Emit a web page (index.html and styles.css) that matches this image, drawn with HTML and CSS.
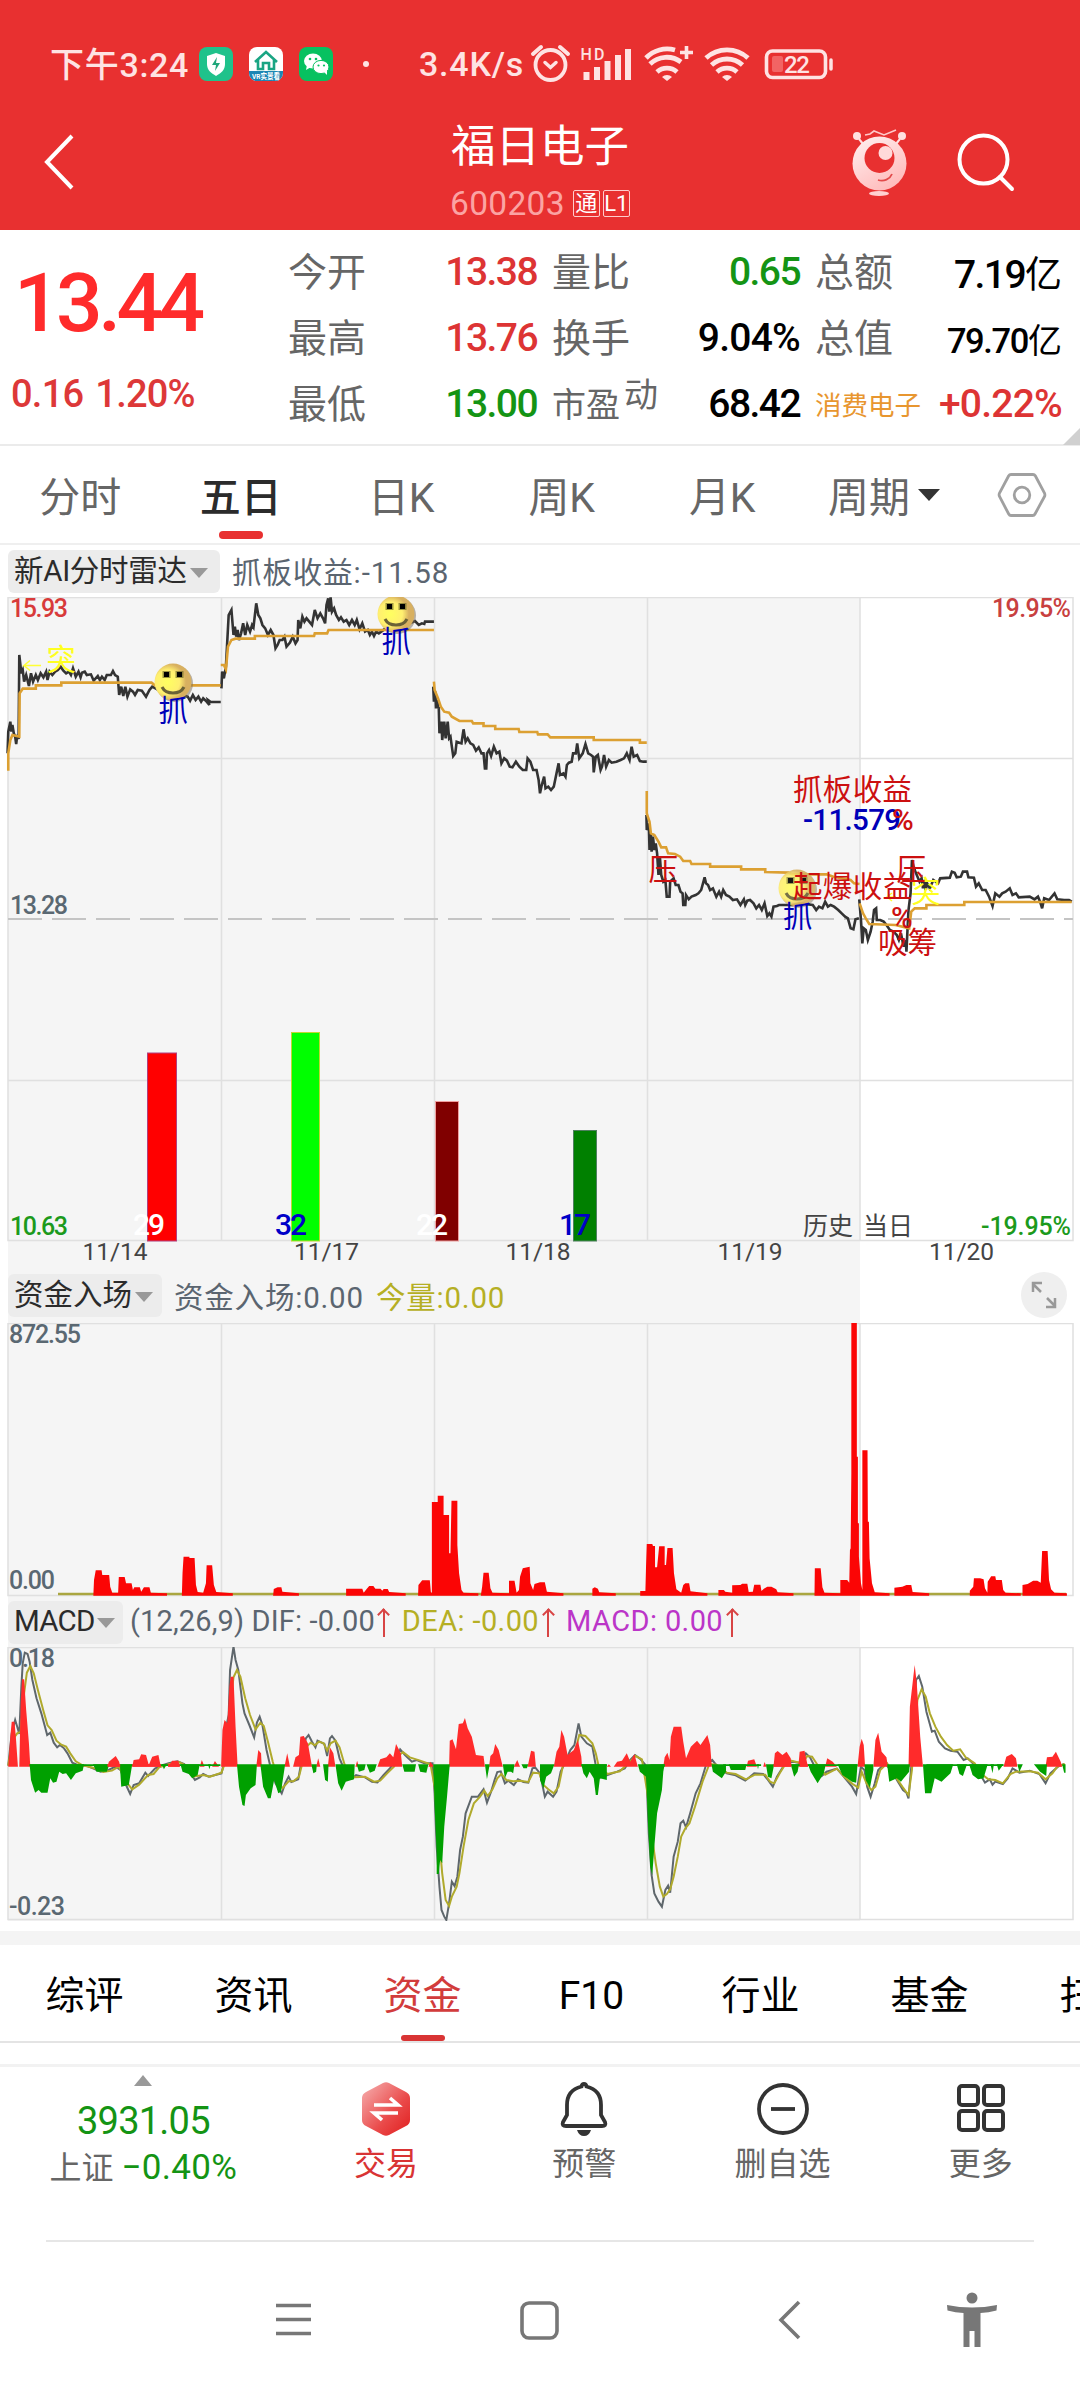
FILE: index.html
```html
<!DOCTYPE html>
<html lang="zh-CN">
<head>
    <meta charset="utf-8">
    <title>福日电子 600203</title>
    <link rel="stylesheet" href="styles.css">
</head>

<body>
    <div id="topArea">
        <div id="statusBar">
            <span class="clock">下午3:24</span>
            <svg class="appIcon" viewBox="0 0 34 34"><rect width="34" height="34" rx="8" fill="#1fc28b"/><path d="M17 6l9 3v8c0 6-4 9-9 12-5-3-9-6-9-12V9z" fill="#fff"/><path d="M18 10l-5 8h4l-1 6 5-8h-4z" fill="#1fa67a"/></svg>
            <svg class="appIcon" viewBox="0 0 34 34"><rect width="34" height="34" rx="8" fill="#fff"/><path d="M0 24h34v2a8 8 0 0 1-8 8H8a8 8 0 0 1-8-8z" fill="#1c86b4"/><path d="M6 15L17 5l11 10M9 13v9h5v-6h6v6h5v-9" fill="none" stroke="#1aa583" stroke-width="2.6"/><text x="17" y="32" font-size="8" font-weight="700" fill="#fff" text-anchor="middle" textLength="28" lengthAdjust="spacingAndGlyphs">VR实景看</text></svg>
            <svg class="appIcon" viewBox="0 0 34 34"><rect width="34" height="34" rx="8" fill="#07c160"/><ellipse cx="14" cy="14" rx="9" ry="7.5" fill="#fff"/><path d="M8 18l-1 5 5-3z" fill="#fff"/><ellipse cx="22" cy="20" rx="8" ry="6.6" fill="#fff" stroke="#07c160"/><path d="M25 25l3 3v-5z" fill="#fff"/><g fill="#07c160"><circle cx="11" cy="12" r="1.3"/><circle cx="17" cy="12" r="1.3"/><circle cx="19.500" cy="18.500" r="1.100"/><circle cx="25" cy="18.500" r="1.100"/></g></svg>
            <span class="dot"></span>
            <span class="speed">3.4K/s</span>
            <svg class="statusIcons" viewBox="530 44 306 40" fill="none" stroke="#fee3e3">
                <circle cx="550.500" cy="65" r="15" stroke-width="3.800"/>
                <path d="M545 62.500l5.500 5 5.500-5" stroke-width="3.500" stroke-linecap="round"/>
                <path d="M533 54l8-7M568 54l-8-7" stroke-width="4" stroke-linecap="round"/>
                <text class="hd" x="580.500" y="60" textLength="24">HD</text>
                <path d="M586.500 80v-8M597 80v-13M607.500 80v-19M618 80v-25M628 80v-31" stroke-width="6"/>
                <path d="M646 58a29 29 0 0 1 29-8M650 64a24 24 0 0 1 31-2M657 72a15 15 0 0 1 20 0" stroke-width="4.800"/>
                <path d="M667 81l-5-4a7 7 0 0 1 10 0z" fill="#fee3e3" stroke="none"/>
                <path d="M686.500 46v13M680 52.500h13" stroke-width="3.600"/>
                <path d="M706 58a31 31 0 0 1 42 0M711.500 65a23 23 0 0 1 31 0M717 72a15 15 0 0 1 20 0" stroke-width="4.800"/>
                <path d="M727 81l-5-4a7 7 0 0 1 10 0z" fill="#fee3e3" stroke="none"/>
                <rect x="766.500" y="51" width="59" height="26.500" rx="6" stroke-width="3.600"/>
                <rect x="772" y="56" width="11" height="16" rx="2" fill="#f26464" stroke="none"/>
                <path d="M831 60v9" stroke-width="3.500" stroke-linecap="round"/>
                <text class="battery" x="784" y="73" textLength="26">22</text>
            </svg>
        </div>
        <div id="titleBar">
            <svg class="backIcon" viewBox="0 0 34 60"><path d="M30 4L5 30l25 26"/></svg>
            <div class="stockTitle">
                <div class="stockName">福日电子</div>
                <div class="stockCode"><span>600203</span><b>通</b><b>L1</b></div>
            </div>
            <svg class="robotIcon" viewBox="848 125 62 75">
                <defs><linearGradient id="robotFill" x1="0" y1="0" x2="0.600" y2="1"><stop offset="0" stop-color="#fff2f2"/><stop offset="1" stop-color="#ffbcbc"/></linearGradient></defs>
                <path d="M865 135l5-1 4-3 10 4 12-5M861 142l3 3M898 142l-3 3" fill="none" stroke="#ffc9c9" stroke-width="1.600"/>
                <circle cx="857" cy="136" r="4" fill="#ffe0e0"/><circle cx="902" cy="136" r="4" fill="#ffe0e0"/>
                <path d="M859 139l5 6M900 139l-5 6" stroke="#ffe0e0" stroke-width="2"/>
                <circle cx="879.500" cy="163.500" r="27" fill="url(#robotFill)"/>
                <circle cx="879.500" cy="158" r="15" fill="#e83030"/>
                <circle cx="885.500" cy="153" r="7" fill="#ffd9d9"/>
                <path d="M878 180c6 2 12-1 14-6" fill="none" stroke="#e24a4a" stroke-width="1.800"/>
                <ellipse cx="879" cy="193.500" rx="10" ry="2.600" fill="#ffd0d0"/>
            </svg>
            <svg class="searchIcon" viewBox="0 0 60 60"><circle cx="27.500" cy="27.500" r="24"/><path d="M44 45l12 12"/></svg>
        </div>
    </div>

    <div id="quote">
        <div class="price">
            <div class="last">13.44</div>
            <div class="change"><span>0.16</span><span>1.20%</span></div>
        </div>
        <div class="grid">
            <div class="item"><label>今开</label><span class="up">13.38</span></div>
            <div class="item"><label>量比</label><span class="down">0.65</span></div>
            <div class="item"><label>总额</label><span>7.19<i>亿</i></span></div>
            <div class="item"><label>最高</label><span class="up">13.76</span></div>
            <div class="item"><label>换手</label><span class="percent">9.04%</span></div>
            <div class="item"><label>总值</label><span class="small">79.70<i>亿</i></span></div>
            <div class="item"><label>最低</label><span class="down">13.00</span></div>
            <div class="item"><label class="pe">市盈<sup>动</sup></label><span>68.42</span></div>
            <div class="item"><label class="sector">消费电子</label><span class="up percent">+0.22%</span></div>
        </div>
        <div class="corner"></div>
    </div>

    <div id="periodTabs">
        <span class="tab">分时</span>
        <span class="tab active">五日</span>
        <span class="tab">日K</span>
        <span class="tab">周K</span>
        <span class="tab">月K</span>
        <span class="tab">周期<i class="caret"></i></span>
        <svg class="settingIcon" viewBox="0 0 50 46"><path d="M14 2.500h22q1.500 0 2.300 1.300L47.500 21q.8 2 0 3.500L38 42q-.8 1.500-2.300 1.500H14q-1.500 0-2.300-1.500L2.500 24.500q-.8-1.700 0-3.500L11.700 3.800Q12.500 2.500 14 2.500z"/><circle cx="25" cy="23" r="7.800"/></svg>
    </div>

    <div class="indicator first">
        <span class="chip">新AI分时雷达<i class="caret"></i></span>
        <span class="value">抓板收益:-11.58</span>
    </div>

    <div id="charts">
        <!-- price -->
        <svg class="chart" viewBox="0 597 1080 670" height="670">
            <g class="gridLines">
                <path d="M8 597.500H1073V1240.500H8zM8 758.500H1073M8 1080.500H1073M221.500 597V1240M434.500 597V1240M647.500 597V1240M860 597V1240"/>
                <path class="dash" d="M8 919H1073"/>
            </g>
            <g class="bars">
                <rect x="147.500" y="1053" width="29" height="188" fill="#f00" stroke="#b04080"/>
                <rect x="291.500" y="1032.500" width="28" height="208.500" fill="#0f0" stroke="#c0d830"/>
                <rect x="435.500" y="1101.500" width="23" height="139.500" fill="#800000" stroke="#f0a0a0"/>
                <rect x="573.500" y="1130.500" width="23" height="110.500" fill="#008000" stroke="#508060"/>
            </g>
            <g class="barText">
                <text x="133" y="1235" fill="#fff" textLength="32">29</text>
                <text x="275" y="1235" fill="#0000c8" textLength="32">32</text>
                <text x="416" y="1235" fill="#fff" textLength="32">22</text>
                <text x="559" y="1235" fill="#0000c8" textLength="32">17</text>
            </g>
            <g class="lines" transform="translate(0 540) scale(.34439 .33333)">
                <path class="priceLine" d="M22 640L24 575L30 545L33 575L36 555L40 580L44 590L47 612L50 585L54 597L56 345L62 400L66 390L70 425L76 405L84 438L90 400L96 425L104 405L110 420L118 400L126 412L134 395L138 420L144 395L152 405L160 395L168 390L176 380L184 392L192 400L200 395L206 405L212 385L220 410L228 395L234 412L238 398L246 395L252 405L264 403L272 422L284 408L290 420L296 410L304 420L310 405L322 405L328 393L334 405L342 410L346 465L352 440L358 468L364 440L370 470L378 448L386 455L392 465L400 450L412 452L424 470L434 450L442 440L460 450L500 455L545 470L552 482L560 465L568 480L576 470L584 485L590 475L600 485L608 495L604 480L612 486L641 486"/>
                <path class="priceLine" d="M643 445L645 395L650 415L656 380L664 225L672 210L678 285L682 260L686 290L690 270L694 300L700 280L706 250L712 285L718 255L726 275L732 255L736 262L744 190L750 225L756 235L762 255L770 265L778 285L786 270L794 285L800 325L806 315L812 300L820 300L826 290L832 320L842 308L850 290L858 310L864 300L866 240L872 265L878 230L884 245L890 235L898 245L906 255L914 210L922 235L930 220L938 235L944 250L948 195L953 175L956 215L960 172L964 215L970 205L976 225L984 240L990 232L998 245L1006 240L1014 255L1022 240L1030 255L1036 240L1044 268L1052 250L1060 275L1068 270L1074 285L1080 275L1086 288L1092 275L1100 280L1120 265L1150 262L1190 250L1205 243L1216 255L1225 250L1232 252L1234 245L1260 245"/>
                <path class="priceLine" d="M1258 440L1260 485L1264 455L1266 505L1270 480L1272 505L1274 500L1276 580L1282 545L1284 600L1290 545L1294 595L1300 545L1304 595L1308 590L1312 620L1316 648L1322 640L1326 605L1334 608L1340 610L1346 568L1352 605L1358 595L1366 610L1374 615L1382 632L1390 622L1398 640L1404 640L1408 685L1412 685L1414 640L1420 630L1426 648L1434 620L1442 640L1450 635L1456 670L1464 655L1472 662L1480 680L1488 682L1498 665L1508 680L1518 690L1528 690L1532 655L1540 665L1548 690L1558 690L1564 720L1568 760L1572 740L1580 710L1584 745L1592 740L1600 750L1608 740L1616 700L1622 670L1626 705L1636 700L1642 710L1646 675L1652 668L1660 665L1664 640L1672 640L1676 610L1682 655L1692 640L1700 612L1708 640L1716 645L1722 650L1724 697L1730 650L1736 645L1744 690L1748 680L1754 645L1760 680L1768 660L1776 668L1790 665L1802 660L1812 655L1820 640L1828 660L1834 620L1840 650L1850 645L1858 663L1868 665L1878 665"/>
                <path class="priceLine" d="M1877 825L1878 870L1884 850L1886 930L1890 880L1892 935L1896 890L1900 930L1904 910L1908 940L1912 1005L1916 950L1920 1005L1926 1025L1932 1020L1936 1070L1944 1070L1946 1025L1956 1015L1962 1035L1970 1035L1976 1055L1982 1060L1984 1095L1990 1095L1992 1065L2000 1078L2008 1070L2020 1065L2028 1060L2036 1050L2046 1012L2050 1030L2056 1035L2062 1050L2070 1045L2080 1070L2088 1055L2094 1070L2100 1050L2108 1065L2118 1070L2128 1080L2140 1078L2150 1095L2160 1078L2164 1095L2170 1082L2178 1080L2188 1090L2196 1105L2204 1095L2212 1110L2220 1090L2228 1128L2234 1120L2240 1130L2246 1100L2256 1098L2262 1095L2300 1095L2320 1090L2360 1095L2370 1110L2378 1100L2388 1105L2396 1085L2404 1100L2412 1095L2422 1100L2434 1110L2444 1120L2454 1130L2462 1135L2470 1165L2478 1168L2484 1138L2494 1135"/>
                <path class="priceLine" d="M2495 1078L2500 1140L2504 1210L2508 1165L2514 1170L2520 1200L2528 1175L2534 1145L2538 1110L2544 1105L2546 1140L2556 1140L2566 1145L2574 1155L2584 1170L2594 1175L2604 1185L2610 1200L2616 1180L2624 1220L2630 1200L2632 1235L2636 1150L2638 1110L2644 1060L2648 960L2656 990L2662 1005L2670 1025L2676 1015L2680 1045L2684 1020L2688 1050L2692 1030L2700 1045L2710 1020L2724 1030L2730 1015L2758 1013L2764 995L2772 998L2778 1012L2790 1010L2796 995L2808 995L2812 1012L2828 1013L2834 1040L2842 1030L2852 1050L2862 1050L2872 1070L2882 1098L2890 1060L2902 1070L2910 1060L2920 1055L2932 1045L2940 1065L2950 1060L2958 1072L2990 1070L3004 1078L3014 1070L3020 1085L3026 1105L3032 1075L3046 1080L3062 1060L3070 1078L3090 1080L3104 1080L3112 1085"/>
                <path class="avgLine" d="M24 692V640L30 600L36 585L56 590L57 460L66 446H104V436H178V428H440L450 436H641M641 375L650 375L656 388L662 320L672 300L684 296H740V288H912L914 280H950L954 270H1260M1260 425L1262 450L1272 475L1280 500L1290 515L1304 518L1312 530L1334 543H1370L1374 550H1404V558H1438V567H1506L1508 576H1560L1562 583H1590L1598 592H1724V600H1858V608H1878M1878 753V820L1886 845L1890 880L1900 885L1912 905L1920 922H1934L1940 940L1960 942L1975 950L1984 963H2004L2008 972H2062V980H2152V988H2222V996L2290 998L2300 1003H2400L2420 1010L2470 1020L2480 1030L2496 1032M2496 1090L2506 1120L2514 1135L2524 1152L2600 1155L2640 1165L2646 1115L2656 1105H2690V1095H2800V1086H3112"/>
            </g>
            <defs>
                <radialGradient id="faceFill" cx=".35" cy=".5"><stop offset="0" stop-color="#ffff60"/><stop offset=".65" stop-color="#ffef70"/><stop offset="1" stop-color="#d8b060"/></radialGradient>
                <g id="face">
                    <circle cx="1.500" cy="1.500" r="18.500" fill="#776a55" opacity=".5"/>
                    <circle r="18.500" fill="url(#faceFill)"/>
                    <path d="M-10.500-11h8v7h-8zM2.500-11h8v7h-8z" fill="#5c5a20" opacity=".6"/>
                    <path d="M-9-10h5v5h-5zM4-10h5v5H4z" fill="#000"/>
                    <path d="M-11 5q3 6 11 6t11-6" fill="none" stroke="#6b6236" stroke-width="3"/>
                </g>
            </defs>
            <use href="#face" x="173" y="682"/>
            <use href="#face" x="396" y="614"/>
            <use href="#face" x="797" y="888" opacity=".9"/>
            <g class="marks">
                <text class="blue" x="158.500" y="721">抓</text>
                <text class="blue" x="381.500" y="652">抓</text>
                <text class="blue" x="783" y="927">抓</text>
                <path d="M41 665.500H24l6-5M24 665.500l6 5" fill="none" stroke="#ff3" stroke-width="1.500"/>
                <path d="M896 897H887l5-4M887 897l5 4" fill="none" stroke="#ff3" stroke-width="1.500"/>
                <text class="yellow" x="46.500" y="670">突</text>
                <text class="yellow" x="911" y="902">突</text>
                <text class="red" x="793" y="800" textLength="119">抓板收益</text>
                <text class="blue num" x="803" y="830" textLength="98">-11.579</text>
                <text class="red num" x="892" y="830">%</text>
                <text class="red" x="648.500" y="880">压</text>
                <text class="red" x="896.500" y="880">压</text>
                <text class="red" x="793" y="897" textLength="119">起爆收益</text>
                <text class="red num" x="891" y="928">%</text>
                <text class="red" x="878" y="953" textLength="59">吸筹</text>
            </g>
            <g class="axis">
                <text x="10" y="617" textLength="58" fill="#d83a3a">15.93</text>
                <text x="992" y="617" textLength="79" fill="#c84040">19.95%</text>
                <text x="10" y="914" textLength="58">13.28</text>
                <text x="10" y="1235" textLength="58" fill="#1c9a1c">10.63</text>
                <text x="981" y="1235" textLength="90" fill="#1c9a1c">-19.95%</text>
                <text class="day" x="803" y="1235" textLength="50">历史</text>
                <text class="day" x="863" y="1235" textLength="50">当日</text>
            </g>
            <g class="dates">
                <text x="115" y="1260">11/14</text>
                <text x="326.500" y="1260">11/17</text>
                <text x="538" y="1260">11/18</text>
                <text x="750" y="1260">11/19</text>
                <text x="961.500" y="1260">11/20</text>
            </g>
        </svg>

        <div class="indicator second">
            <span class="chip">资金入场<i class="caret"></i></span>
            <span class="value">资金入场:0.00</span>
            <span class="value olive">今量:0.00</span>
            <svg class="expandIcon" viewBox="0 0 46 46"><circle cx="23" cy="23" r="23" fill="#efefef"/><path d="M20 20l-8-8M12 20v-9h9M26 26l8 8M34 26v9h-9" fill="none" stroke="#999" stroke-width="2.500"/></svg>
        </div>

        <!-- money flow -->
        <svg class="chart" viewBox="0 1323 1080 274" height="274">
            <path class="gridLines" d="M8 1323.500H1073V1595.500H8zM221.500 1323V1595M434.500 1323V1595M647.500 1323V1595M860 1323V1595"/>
            <path d="M58 1594H1066" stroke="#aaa640" stroke-width="2.500"/>
            <g fill="#fb0505" transform="translate(0 1310) scale(.34439 .33333)">
                <path d="M271 857L273 810L278 781H295L297 795H317L320 830L326 848H343L345 801H362L366 820H382L386 840L390 832H406L410 845L418 832H434L438 848L485 850V857z"/>
                <path d="M528 857L530 790L533 740H550V744H565L569 825L574 846L590 848L598 820L600 766H616L621 825L628 846L676 850V857z"/>
                <path d="M793 857L795 837L806 832H817L820 845L868 850V857z"/>
                <path d="M1005 857V836H1052L1056 848L1064 838L1072 828H1084L1090 836H1105L1110 842L1114 837H1126L1130 846L1178 850V857z"/>
                <path d="M1214 857L1215 825L1226 811H1248L1251 845L1254 850V576H1271V557H1288V615H1304V730H1308L1311 572H1328V705L1333 790L1340 840L1346 848L1389 850V857z"/>
                <path d="M1396 857L1400 830L1404 788H1419L1424 835L1430 848L1478 850V812H1494L1500 848L1507 840L1510 800L1518 775L1538 770L1540 820L1548 840L1552 822L1568 817H1582L1588 845L1636 850V857z"/>
                <path d="M1720 857V836L1727 832L1736 836L1740 847L1788 850V857z"/>
                <path d="M1859 857V843H1874L1876 765L1878 702H1894L1896 708H1902V772H1908L1912 730L1914 709H1930V765H1934L1938 714H1953L1957 790L1964 838L1978 848L1984 825L1990 820H2001L2005 844L2054 850V857z"/>
                <path d="M2086 857V840H2102L2106 845L2126 848V826L2150 825L2155 821H2170L2174 846L2186 845L2190 824H2208L2211 843L2218 836L2228 830H2240L2254 838L2258 847L2304 850V857z"/>
                <path d="M2365 857L2366 775H2383L2388 832L2394 848L2440 850V810H2460L2466 818L2468 720L2470 715L2472 490V37H2488V440H2491V640H2494V740L2500 820L2504 840V421H2519L2520 635H2523L2525 745L2532 820L2540 847L2583 850V857z"/>
                <path d="M2597 857V833L2620 830L2632 825H2646L2650 846L2698 850V857z"/>
                <path d="M2816 857V842L2826 830L2828 805H2846L2856 808L2860 835L2867 848L2868 815L2878 799H2890L2892 810H2909L2913 840L2920 848L2964 850V857z"/>
                <path d="M2969 857V825L2984 822L3000 812L3012 812L3022 818L3026 723H3042L3046 810L3052 838L3062 848L3098 850V857z"/>
            </g>
            <g class="axis">
                <text x="9" y="1343" textLength="72">872.55</text>
                <text x="9" y="1589" textLength="46">0.00</text>
            </g>
        </svg>

        <div class="indicator third">
            <span class="chip">MACD<i class="caret"></i></span>
            <span class="value">(12,26,9) DIF: -0.00<i class="arrow"></i></span>
            <span class="value olive">DEA: -0.00<i class="arrow"></i></span>
            <span class="value purple">MACD: 0.00<i class="arrow"></i></span>
        </div>

        <!-- macd -->
        <svg class="chart" viewBox="0 1647 1080 274" height="274">
            <path class="gridLines" d="M8 1647.500H1073V1919.500H8zM221.500 1647V1919M434.500 1647V1919M647.500 1647V1919M860 1647V1919"/>
            <g class="lines" transform="translate(0 1620) scale(.34439 .33333)">
                <path class="difLine" d="M24 437L34 340L44 300L50 320L56 342L62 200L66 130L72 98L80 102L86 125L94 180L106 235L120 280L130 318L137 345L146 338L156 368L166 382L174 375L186 385L196 400L210 428L230 437L250 437L270 445L292 455L315 450L335 440L350 450L366 495L378 522L388 495L404 490L422 458L430 468L450 446L465 438L490 430L515 424L535 432L555 462L566 480L580 472L590 462L606 470L625 465L643 460L648 440L656 325L664 285L668 150L678 80L684 120L692 150L704 250L710 280L724 315L738 352L746 308L754 290L762 315L774 390L784 435L800 490L818 520L828 490L838 470L846 486L866 478L876 420L888 355L896 345L906 365L916 382L922 362L934 368L942 372L950 408L958 355L964 348L974 362L986 415L1000 450L1024 475L1034 465L1060 472L1080 485L1096 487L1114 465L1132 445L1150 420L1162 388L1176 405L1196 425L1210 420L1232 430L1256 430L1262 520L1268 680L1276 800L1282 870L1290 890L1296 900L1304 850L1312 785L1320 798L1328 770L1336 690L1344 650L1352 580L1370 530L1388 530L1404 508L1414 548L1426 515L1436 480L1444 456L1454 454L1466 490L1476 482L1492 495L1504 478L1520 486L1534 488L1546 445L1554 442L1568 460L1576 500L1582 530L1590 515L1606 530L1616 515L1628 455L1640 430L1656 390L1668 375L1680 310L1688 350L1704 370L1720 380L1730 437L1736 475L1764 465L1792 455L1814 445L1830 420L1844 405L1860 418L1876 437L1884 640L1892 765L1900 820L1912 845L1922 860L1932 810L1940 797L1946 818L1956 710L1968 665L1976 610L1984 602L1992 622L2004 580L2020 520L2034 490L2050 435L2068 420L2082 438L2110 460L2136 466L2164 482L2190 460L2216 462L2230 480L2244 500L2256 470L2280 430L2304 425L2326 430L2340 400L2352 412L2366 440L2386 468L2400 455L2430 446L2450 470L2474 500L2486 522L2500 440L2510 450L2518 500L2528 530L2540 490L2550 450L2570 430L2590 455L2610 490L2622 510L2632 518L2638 535L2646 440L2652 300L2660 180L2668 168L2678 200L2690 275L2706 335L2714 332L2726 365L2744 385L2760 392L2780 395L2798 420L2810 415L2830 435L2850 470L2860 488L2874 478L2882 494L2890 485L2912 492L2926 475L2940 445L2960 458L2990 452L3018 462L3036 490L3050 460L3072 440L3090 432"/>
                <path class="deaLine" d="M24 437L36 360L50 340L60 335L70 220L78 158L88 138L98 160L110 210L126 272L138 316L150 330L164 362L178 374L192 380L204 400L220 424L240 436L270 443L300 456L325 452L345 440L370 490L384 508L404 494L430 465L446 462L462 442L490 433L520 426L540 437L560 470L590 465L610 470L643 458L650 438L662 340L670 240L678 172L688 150L698 170L712 235L726 285L742 328L756 308L766 318L778 365L792 425L806 475L820 505L838 484L852 484L868 470L878 430L892 378L902 368L914 376L926 365L940 370L950 392L960 370L974 362L986 382L1000 432L1014 465L1030 472L1060 470L1086 485L1104 482L1124 460L1144 440L1160 405L1170 396L1190 412L1220 422L1250 433L1262 500L1274 640L1284 760L1294 840L1304 858L1312 830L1326 800L1334 760L1346 680L1360 600L1376 550L1394 530L1406 512L1416 528L1430 508L1444 475L1456 462L1470 480L1490 484L1510 482L1534 486L1548 458L1566 460L1578 495L1592 508L1608 520L1622 500L1634 440L1650 410L1670 395L1682 345L1700 348L1720 370L1730 400L1738 437L1764 462L1800 454L1824 430L1846 408L1864 418L1880 520L1892 640L1904 730L1916 800L1926 830L1936 822L1946 808L1956 770L1968 710L1978 650L1990 625L2002 610L2018 560L2040 485L2060 432L2080 434L2110 458L2136 462L2166 478L2192 464L2222 464L2236 485L2248 490L2264 460L2288 420L2310 425L2330 430L2344 408L2358 410L2374 435L2396 464L2430 446L2456 475L2476 492L2492 503L2502 455L2516 490L2530 510L2542 500L2556 450L2576 430L2600 470L2620 500L2638 525L2648 450L2656 330L2664 240L2676 208L2688 230L2700 280L2716 320L2732 350L2750 375L2768 392L2788 388L2804 412L2830 430L2850 462L2870 478L2890 480L2912 490L2934 462L2950 455L2990 454L3014 458L3036 478L3056 460L3070 440L3092 432"/>
                <path class="rise" d="M24 440L30 350L34 305H42L46 350L52 440L56 440L60 250L64 178H70L76 270L84 370L88 440zM312 440L316 425L336 408L346 425L349 440zM384 440L388 420L404 418L410 403L424 405L432 435L442 410L460 405L467 440zM488 440L500 422H518L522 440zM580 440L586 420L594 440zM616 440L624 423L636 440zM642 440L646 330L652 300L660 310L666 200L670 170H678L684 320L690 440zM744 440L750 390L758 400L760 440zM826 440L834 400L842 440zM851 440L858 412L868 405L872 350L882 348L894 370L906 440zM918 440L924 415L930 440zM952 440L958 382L968 400L974 440zM1032 440L1037 422L1042 440zM1096 440L1104 418L1122 412L1132 400L1142 412L1150 372L1164 400L1168 440zM1244 440L1250 425L1260 440zM1304 440L1306 362L1314 358L1324 388L1332 312L1344 310L1350 294L1358 325L1370 350L1382 405L1404 408L1408 440zM1420 440L1424 408L1432 400L1438 372L1448 390L1460 440zM1492 440L1502 420L1510 440zM1532 440L1542 392L1552 395L1556 440zM1608 440L1616 395L1624 380L1630 330L1638 350L1648 405L1666 390L1678 360L1688 410L1690 440zM1762 440L1768 433L1774 440zM1782 440L1792 425L1806 422L1820 400L1830 425L1842 402L1852 440zM1926 440L1930 412L1938 398L1944 420L1948 350L1956 320H1978L1984 365L1992 415L2006 380L2024 362L2034 375L2054 345L2062 375L2067 440zM2168 440L2172 422L2190 418L2198 440zM2216 440L2220 426L2226 440zM2246 440L2250 400L2258 393L2272 405L2284 395L2296 415L2298 440zM2318 440L2322 395L2336 392L2346 440zM2396 440L2402 415L2418 425L2430 440zM2490 440L2496 380L2502 356L2508 375L2512 440zM2536 440L2542 360L2550 338L2560 395L2574 412L2578 440zM2638 440L2642 260L2652 170L2656 135L2662 190L2672 350L2680 440zM2914 440L2922 410L2938 402L2950 415L2954 440zM3036 440L3040 412L3056 410L3066 395L3080 425L3084 440z"/>
                <path class="fall" d="M86 433L90 480L102 518L112 510L120 518H138L146 475L154 488L164 485L172 455L182 462L192 460L206 480L220 460L240 452L244 433zM270 433L280 455L310 455L318 433zM348 433L352 500L374 495L384 433zM470 433L476 448L484 433zM524 433L530 455L548 462L558 475L574 465L580 433zM604 433L608 448L612 433zM688 433L694 500L704 555L710 558L714 525L728 505L742 495L746 433zM756 433L764 500L778 535L786 535L796 480L808 520L816 515L828 433zM904 433L910 460L918 455L920 433zM938 433L944 480L952 485L954 433zM974 433L982 490L992 512L1004 485L1028 478L1030 433zM1036 433L1042 455L1058 450L1062 433zM1064 433L1074 458L1088 452L1094 433zM1168 433L1174 455L1204 455L1208 433zM1214 433L1220 455L1238 458L1244 433zM1258 433L1262 560L1268 700V762H1274L1278 720L1284 730L1290 620L1298 530L1306 433zM1408 433L1414 478L1422 433zM1460 433L1466 475L1474 455L1484 455L1490 460L1494 433zM1514 433L1520 445H1530L1534 433zM1568 433V480L1578 505L1586 470L1600 460L1610 433zM1688 433L1694 460L1704 475L1712 455L1724 475L1730 525H1736L1742 475L1762 480V433zM1852 433L1858 455L1876 470L1882 620L1888 740L1894 765L1900 680L1908 580L1922 510L1926 455L1930 433zM2066 433L2070 455L2096 475L2108 455V433zM2116 433L2122 450L2164 450L2168 433zM2198 433H2204L2201 448zM2224 433L2230 470L2240 475L2248 433zM2296 433L2306 470L2316 455L2320 433zM2346 433L2354 455L2374 490L2392 460L2398 433zM2432 433L2446 465L2474 485L2486 488L2490 433zM2510 433L2514 480L2526 503L2536 450V433zM2576 433L2582 485L2604 475L2616 485L2640 455L2642 433zM2680 433L2686 520H2704L2714 475L2734 485L2760 460L2768 433zM2778 433L2786 462L2796 468L2808 433zM2814 433L2824 465L2840 478L2856 475L2868 433zM2876 433L2882 460L2886 433zM2894 433L2900 452L2914 433zM2954 433L2960 455L2970 433zM3002 433L3020 455L3038 468L3040 433zM3084 433L3090 458H3094V433z"/>
                <path class="fall" d="M86 433H640V438H86zM1688 433H1762V438H1688zM1876 433H1930V440zM2100 433H2210V438H2100zM2260 433H2490V438H2260zM2690 433H2914V438H2690z"/>
                <path class="rise" d="M312 432H349V440H312zM384 432H467V440H384zM488 432H522V440H488zM2246 432H2298V440H2246zM2322 432H2346V440H2322z"/>
            </g>
            <g class="axis">
                <text x="9" y="1667" textLength="46">0.18</text>
                <text x="9" y="1915" textLength="56">-0.23</text>
            </g>
        </svg>
    </div>

    <div id="infoTabs">
        <span>综评</span>
        <span>资讯</span>
        <span class="active">资金</span>
        <span>F10</span>
        <span>行业</span>
        <span>基金</span>
        <span>扫雷</span>
    </div>

    <div id="toolBar">
        <div class="market">
            <i class="upCaret"></i>
            <div class="marketIndex">3931.05</div>
            <div class="marketName">上证 <span>−0.40%</span></div>
        </div>
        <div class="tool trade">
            <svg viewBox="0 0 56 56">
                <defs><linearGradient id="tradeFill" x1="0" y1="0" x2="1" y2="1"><stop offset="0" stop-color="#f6b3b3"/><stop offset=".6" stop-color="#ea4a4a"/><stop offset="1" stop-color="#e01e1e"/></linearGradient></defs>
                <path d="M25 2q3-1.500 6 0l17 9q4 2 4 6v22q0 4-4 6l-17 9q-3 1.500-6 0L8 45q-4-2-4-6V17q0-4 4-6z" fill="url(#tradeFill)"/>
                <path d="M16 24h24l-8-7M40 32H16l8 7" fill="none" stroke="#fff" stroke-width="3.600"/>
            </svg>
            <span>交易</span>
        </div>
        <div class="tool">
            <svg viewBox="0 0 56 56" fill="none" stroke="#333" stroke-width="3.800">
                <path d="M28 3q2 0 2.500 2.500Q45 9 45 24v10l4 7q1.500 4-3 4H10q-4.500 0-3-4l4-7V24Q11 9 25.500 5.500 26 3 28 3z"/>
                <path d="M21 49h14q-2 6-7 6t-7-6z" fill="#333" stroke="none"/>
            </svg>
            <span>预警</span>
        </div>
        <div class="tool">
            <svg viewBox="0 0 56 56" fill="none" stroke="#333" stroke-width="3.800"><circle cx="28" cy="28" r="24"/><path d="M16 28h24"/></svg>
            <span>删自选</span>
        </div>
        <div class="tool">
            <svg viewBox="0 0 56 56" fill="none" stroke="#333" stroke-width="4"><rect x="6" y="5" width="19" height="19" rx="3"/><rect x="31" y="5" width="19" height="19" rx="3"/><rect x="6" y="30" width="19" height="19" rx="3"/><rect x="31" y="30" width="19" height="19" rx="3"/></svg>
            <span>更多</span>
        </div>
    </div>

    <div id="navBar">
        <svg viewBox="0 0 1080 159" fill="none" stroke="#777" stroke-width="3.600">
            <path d="M276 64.500h35M276 78.500h35M276 92.500h35"/>
            <rect x="522" y="62" width="35" height="35" rx="7"/>
            <path d="M799 61l-18 18 18 18"/>
            <circle cx="972" cy="57" r="5.500" fill="#777" stroke="none"/>
            <path d="M947 64q25 5 50 0l-.5 5.500q-8 2-16 2.500V106h-6V90h-5v16h-6V72q-8-.5-16-2.500z" fill="#777" stroke="none"/>
        </svg>
    </div>
</body>
</html>
```

FILE: styles.css
```css
html,body {margin: 0; padding: 0;}

body
{
    width: 1080px;
    height: 2400px;
    overflow: hidden;
    background: #fff;
    font-family: Roboto, "Noto Sans CJK SC", sans-serif;
    color: #000;
}

i, b {font-style: normal; font-weight: 400;}
svg {display: block; flex: none;}

/* header */
#topArea
{
    height: 230px;
    background: #e83030;
    color: #fff;
}

#statusBar
{
    display: flex;
    align-items: center;
    box-sizing: border-box;
    height: 84px;
    padding: 44px 0 0 50px;
    font-size: 34px;
    font-weight: 500;
    color: #fee3e3;
}
.clock {width: 149px; margin-top: -4px; white-space: nowrap; letter-spacing: 0.7px;}
.appIcon {width: 34px; height: 34px; margin-right: 16px;}
.dot {width: 6px; height: 6px; margin: 0 50px 0 14px; border-radius: 50%; background: #fee3e3;}
.speed {width: 111px; letter-spacing: 0.8px;}
.statusIcons {width: 306px; height: 40px;}
.statusIcons text {stroke: none; fill: #fee3e3; font-weight: 500;}
.hd {font-size: 16px;}
.battery {font-size: 24px;}

#titleBar
{
    display: flex;
    height: 146px;
}
.backIcon {width: 34px; height: 60px; margin: 48px 0 0 42px;}
.backIcon path, .searchIcon path, .searchIcon circle {fill: none; stroke: #fff; stroke-width: 4;}
.stockTitle {width: 400px; margin-left: 264px; text-align: center;}
.stockName {margin-top: 31px; font-size: 44.5px; line-height: 64px;}
.stockCode
{
    display: flex;
    justify-content: center;
    align-items: center;
    height: 48px;
    font-size: 33.5px;
    color: #fba3a3;
}
.stockCode span {margin-right: 5px; letter-spacing: 0.3px;}
.stockCode b
{
    width: 25px;
    height: 25px;
    margin-left: 3px;
    border: 1px solid #fcc;
    border-radius: 2px;
    font-size: 22px;
    line-height: 25px;
    color: #fff;
}
.robotIcon {width: 62px; height: 75px; margin: 41px 0 0 108px;}
.searchIcon {width: 60px; height: 60px; margin: 48px 0 0 46px;}
.searchIcon path {stroke-linecap: round;}

/* quote */
#quote
{
    position: relative;
    display: flex;
    box-sizing: border-box;
    height: 216px;
    padding-top: 9px;
    border-bottom: 2px solid #ebebeb;
}
.price {width: 288px; color: #ff2b2b;}
.last {padding: 15px 0 0 14px; font-size: 82px; font-weight: 500; line-height: 98px; letter-spacing: -0.055em;}
.change {display: flex; gap: 12px; margin-top: 20px; padding-left: 11px; font-size: 38px; font-weight: 500; line-height: 44px; letter-spacing: -0.02em; color: #dd3838;}
.grid
{
    display: grid;
    grid-template-columns: 249px 248px 247px;
    grid-auto-rows: 66px;
    column-gap: 15px;
}
.item {display: flex; justify-content: space-between; align-items: center; white-space: nowrap;}
.item label {font-size: 39px; color: #666; padding-top: 3px; line-height: 63px; margin-right: -10px;}
.item span {font-size: 39px; font-weight: 500; letter-spacing: -0.04em;}
.item i {font-size: 37px; font-weight: 400; letter-spacing: 0;}
.item .percent {letter-spacing: -0.02em;}
.item .small {font-size: 34.5px;}
.item .small i {font-size: 34px;}
.item .pe {font-size: 34px;}
.item sup {font-size: 34px; line-height: 0; vertical-align: 10px; margin-left: 4px;}
.item .sector {font-size: 26.5px; color: #e8962f;}
.item .up {color: #dd3434;}
.item .down {color: #149414;}
.corner
{
    position: absolute;
    right: 0;
    bottom: -1px;
    border-left: 17px solid transparent;
    border-bottom: 17px solid #d0d0d0;
}

/* period tabs */
#periodTabs
{
    display: flex;
    align-items: center;
    box-sizing: border-box;
    height: 99px;
    border-bottom: 2px solid #efefef;
    font-size: 41px;
    color: #666;
}
.tab {position: relative; width: 160.5px; text-align: center; white-space: nowrap; line-height: 60px; padding-top: 7px;}
.tab:nth-child(6) {width: 167px; text-indent: -4px;}
.tab.active {color: #2b2b2b; font-weight: 500;}
.tab.active::after
{
    content: "";
    position: absolute;
    left: 58px;
    bottom: -11px;
    width: 44px;
    height: 8px;
    border-radius: 4px;
    background: #e83030;
}
.caret
{
    display: inline-block;
    border: 9px solid transparent;
    border-top: 10px solid #999;
    border-bottom: 0;
    margin-left: 3px;
    vertical-align: 3px;
}
.tab .caret {border-width: 12px 11px 0; border-top-color: #333; margin-left: 8px; vertical-align: 11px;}
.settingIcon {width: 50px; height: 46px; margin-left: 27px; fill: none; stroke: #a0a0a0; stroke-width: 2.8;}

/* indicator rows */
.indicator
{
    display: flex;
    align-items: center;
    padding-left: 8px;
    font-size: 29.5px;
    color: #5b6570;
    white-space: nowrap;
}
.first {height: 52px;}
.second {height: 56px;}
.third {height: 50px;}
.chip
{
    box-sizing: border-box;
    height: 43px;
    padding: 0 8px 0 6px;
    border-radius: 6px;
    background: #ececec;
    line-height: 43px;
    color: #2b2b2b;
}
.value {margin: -3px 0 0 12px;}
.first .chip {width: 212px; letter-spacing: -0.3px;}
.first .value {letter-spacing: 0.9px;}
.second .chip {width: 154px;}
.second .value {letter-spacing: 0.8px; margin-top: -1px;}
.third .chip {width: 115px; letter-spacing: -0.8px; line-height: 41px;}
.third .value {margin-left: 7px; font-size: 29px; letter-spacing: 0.15px;}
.third .value + .value {margin-left: 11px; letter-spacing: 0.4px;}
.olive {color: #b5af24;}
.purple {color: #bb35c8;}
.expandIcon {width: 46px; height: 46px; margin: 0 13px 0 auto;}
.arrow
{
    position: relative;
    display: inline-block;
    width: 2px;
    height: 28px;
    margin: 0 6px 0 8px;
    background: #d84444;
    vertical-align: -6px;
}
.arrow::before
{
    content: "";
    position: absolute;
    left: -3.5px;
    top: 1px;
    width: 7px;
    height: 7px;
    border: solid #d84444;
    border-width: 2px 0 0 2px;
    transform: rotate(45deg);
}

/* charts */
#charts
{
    height: 1324px;
    margin-bottom: 10px;
    background: linear-gradient(90deg, #fff 8px, #f5f5f5 8px, #f5f5f5 860px, #fff 860px);
}
.chart {width: 1080px; overflow: hidden;}
.gridLines {fill: none; stroke: #e0e0e0; stroke-width: 1.5;}
.dash {stroke: #c4c4c4; stroke-width: 2; stroke-dasharray: 34 10;}
.lines path {vector-effect: non-scaling-stroke;}
.priceLine, .avgLine, .difLine, .deaLine {fill: none; stroke-width: 2.6;}
.priceLine {stroke: #333;}
.avgLine {stroke: #dca032;}
.difLine {stroke: #5f676c; stroke-width: 2;}
.deaLine {stroke: #b0aa2c; stroke-width: 2;}
.rise {fill: #ff2b2b;}
.fall {fill: #00a000;}
.barText {font-size: 30px; font-weight: 500;}
.marks {font-size: 29.5px;}
.marks .num {font-weight: 500;}
.blue {fill: #0000b8;}
.red {fill: #cc1010;}
.yellow {fill: #ffff20;}
.axis {font-size: 25px; font-weight: 500; fill: #5a6872;}
.axis .day {font-weight: 400; fill: #444;}
.dates {font-size: 24.5px; fill: #444; text-anchor: middle;}

/* info tabs */
#infoTabs
{
    display: flex;
    box-sizing: border-box;
    height: 112px;
    overflow: hidden;
    border-top: 14px solid #f4f4f4;
    border-bottom: 2px solid #e4e4e4;
    font-size: 39px;
    line-height: 103px;
}
#infoTabs span {position: relative; flex: none; width: 169px; text-align: center;}
#infoTabs .active {color: #d23c3c;}
#infoTabs .active::after
{
    content: "";
    position: absolute;
    left: 63px;
    bottom: 0;
    width: 44px;
    height: 6px;
    border-radius: 3px;
    background: #d93434;
}

/* bottom tools */
#toolBar
{
    display: flex;
    box-sizing: border-box;
    height: 176px;
    margin-top: 21px;
    border-top: 3px solid #f2f2f2;
    color: #666;
}
.market {width: 287px; text-align: center;}
.upCaret
{
    display: block;
    width: 0;
    margin: 8px auto 0;
    border: 9px solid transparent;
    border-top: 0;
    border-bottom: 11px solid #999;
}
.marketIndex {margin-top: 13px; font-size: 38px; line-height: 44px; letter-spacing: -0.02em; color: #149414;}
.marketName {margin-top: 2px; font-size: 32px; line-height: 46px; white-space: nowrap;}
.marketName span {font-size: 35px; letter-spacing: 0.3px; color: #149414;}
.tool {width: 198.5px; font-size: 32px; line-height: 46px; text-align: center;}
.tool svg {width: 56px; height: 56px; margin: 14px auto 4px;}
.trade {color: #d93434;}

#navBar {height: 160px;}
#navBar::before
{
    content: "";
    display: block;
    height: 2px;
    margin: 0 46px -1px;
    background: #e6e6e6;
}
```
